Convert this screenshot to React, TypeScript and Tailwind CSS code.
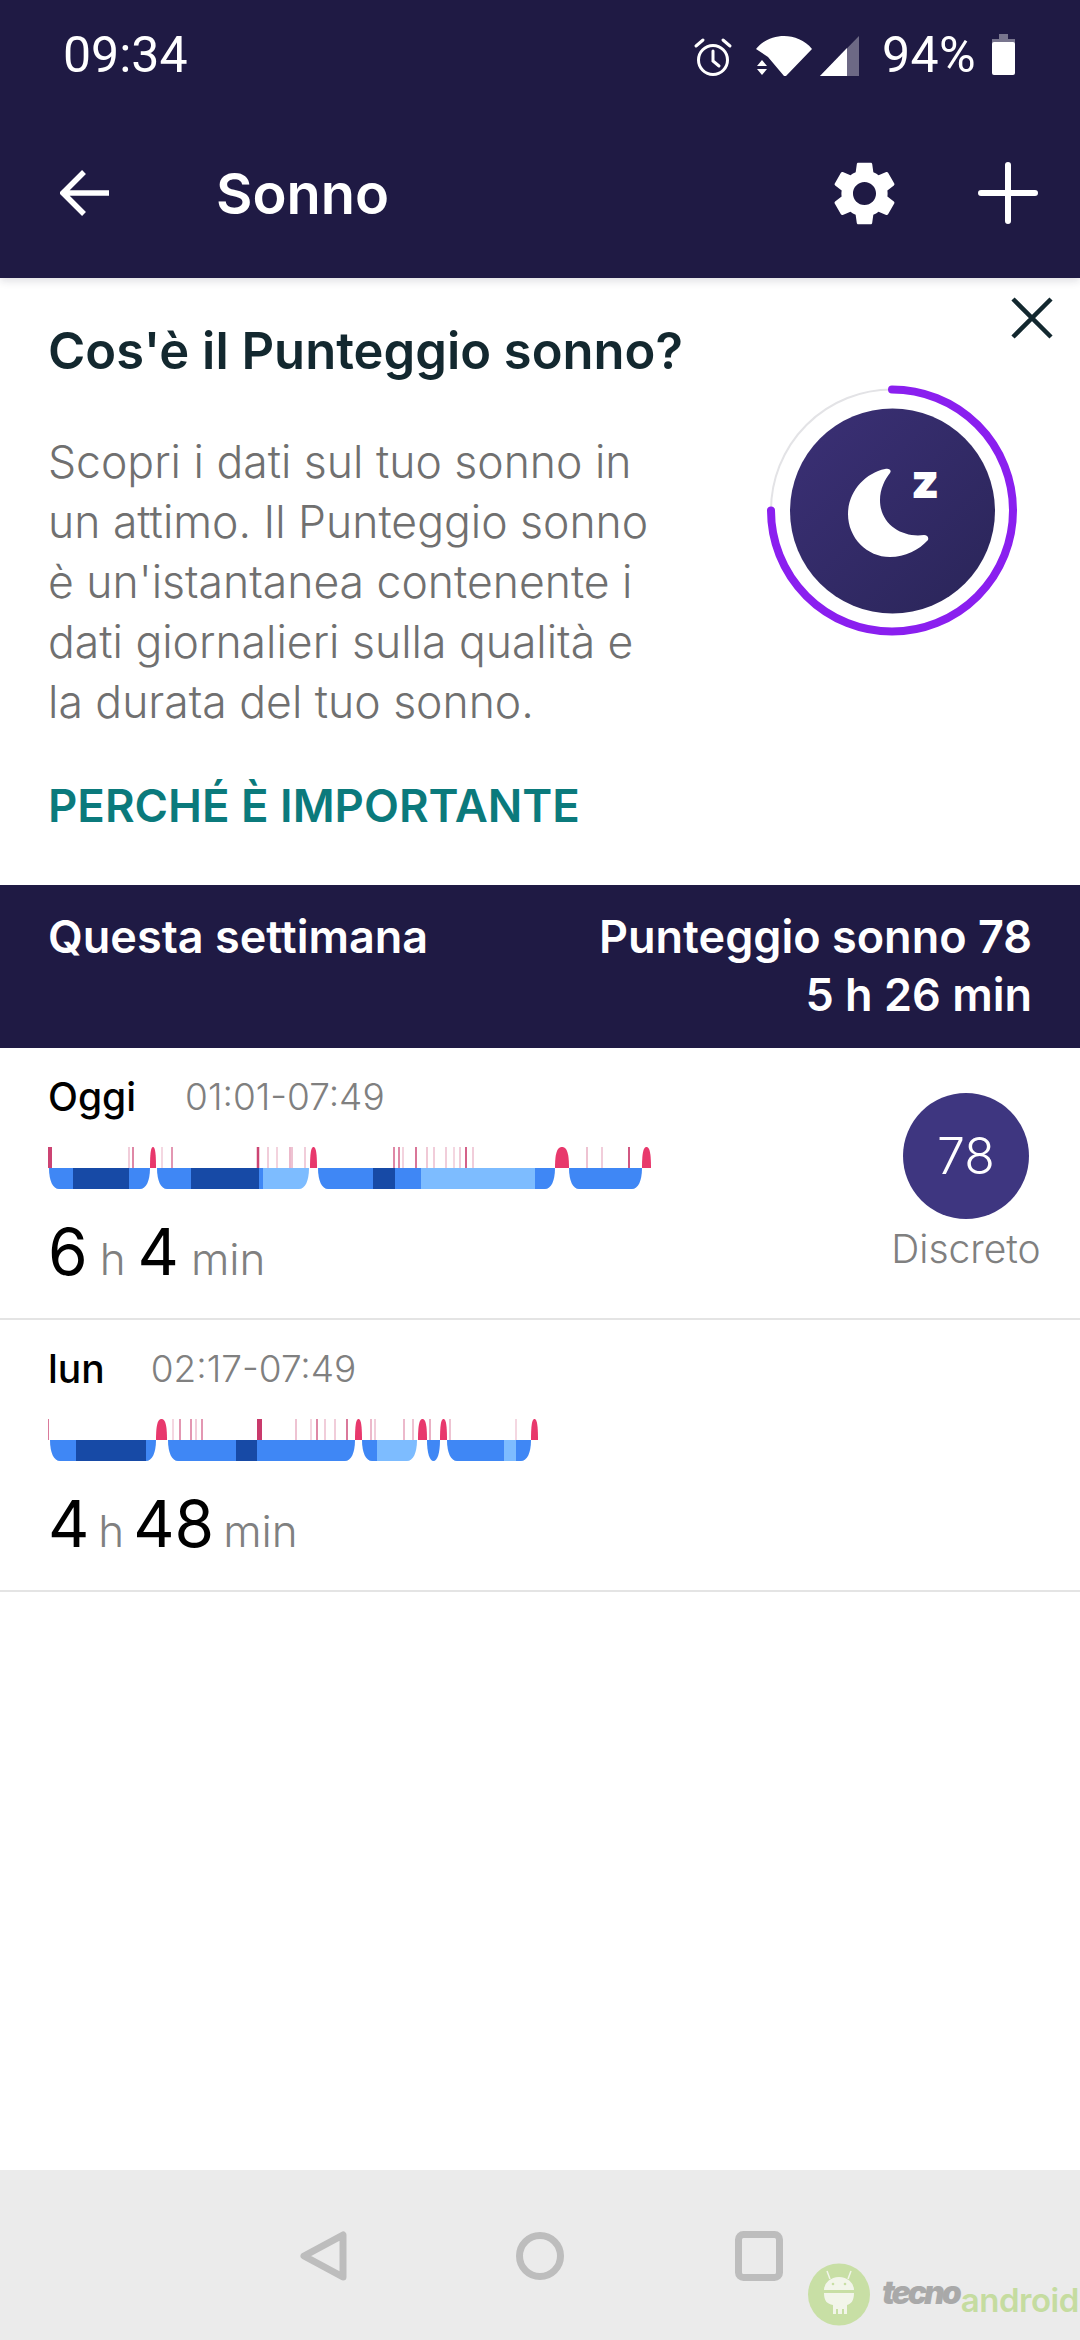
import React from 'react';

type Seg = [number, 'l' | 'm' | 'd'];
type Group = { from: number; to: number; segs: Seg[] };

const segColor = { l: '#7dbcff', m: '#3f87f5', d: '#174aa6' };

const todayBar = {
  groups: [
    { from: 49, to: 150, segs: [[49, 'm'], [73, 'd'], [129, 'm']] },
    { from: 157, to: 309, segs: [[157, 'm'], [191, 'd'], [259, 'm'], [263, 'l']] },
    { from: 318, to: 555, segs: [[318, 'm'], [373, 'd'], [395, 'm'], [421, 'l'], [535, 'm']] },
    { from: 569, to: 642, segs: [[569, 'm']] },
  ] as Group[],
  blobs: [[150, 156], [310, 317], [555, 569], [642, 651]],
  lines: [
    [50, 4, 0.95], [129, 1, 0.5], [133, 1.5, 0.8], [162, 1, 0.4], [172, 1.5, 0.7], [258, 2.5, 0.95], [268, 1, 0.5],
    [277, 1, 0.45], [290, 1, 0.7], [292, 1, 0.6], [305, 1, 0.5], [394, 1.5, 0.8], [399, 1.5, 0.8], [403, 1, 0.45],
    [416, 2, 0.7], [427, 1, 0.55], [434, 1, 0.5], [446, 1, 0.5], [454, 1, 0.4], [460, 1, 0.5], [466, 2, 0.8],
    [473, 1, 0.5], [587, 1, 0.6], [602, 1, 0.5], [629, 2, 0.85],
  ],
};

const mondayBar = {
  groups: [
    { from: 50, to: 156, segs: [[50, 'm'], [76, 'd'], [146, 'm']] },
    { from: 168, to: 355, segs: [[168, 'm'], [236, 'd'], [257, 'm']] },
    { from: 362, to: 417, segs: [[362, 'm'], [377, 'l']] },
    { from: 427, to: 440, segs: [[427, 'm']] },
    { from: 447, to: 531, segs: [[447, 'm'], [504, 'l'], [516, 'm']] },
  ] as Group[],
  blobs: [[156, 167], [355, 362], [418, 427], [440, 447], [531, 538]],
  lines: [
    [48, 1.5, 0.9], [173, 1, 0.4], [180, 1.5, 0.7], [191, 1.5, 0.7], [196, 1, 0.5], [202, 1.5, 0.7], [259.5, 5, 1],
    [296, 1, 0.6], [311, 1, 0.4], [317, 1.5, 0.8], [325, 1, 0.5], [335, 1, 0.5], [347, 1.5, 0.9], [371, 1, 0.7],
    [375, 1, 0.5], [404, 1, 0.7], [413, 1, 0.6], [430, 1, 0.8], [450, 1, 0.6], [516, 1, 0.4],
  ],
};

function SleepBar({ id, data }: { id: string; data: typeof todayBar }) {
  return (
    <svg width="620" height="42" viewBox="48 0 620 42" className="block">
      {data.lines.map(([x, w, o], i) => (
        <rect key={i} x={x - w / 2} y="0" width={w} height="21" fill="#c93a6c" opacity={o} />
      ))}
      {data.blobs.map(([a, b], i) => (
        <path key={i} d={`M${a} 21 C${a} 4 ${a + (b - a) * 0.2} 0 ${(a + b) / 2} 0 C${b - (b - a) * 0.2} 0 ${b} 4 ${b} 21 Z`} fill="#e8386c" />
      ))}
      {data.groups.map((g, i) => {
        const r = Math.min(10, (g.to - g.from) / 2);
        const shape = `M${g.from} 21 C${g.from} 34 ${g.from + r * 0.4} 42 ${g.from + r} 42 L${g.to - r} 42 C${g.to - r * 0.4} 42 ${g.to} 34 ${g.to} 21 Z`;
        return (
          <g key={i}>
            <clipPath id={`${id}-${i}`}>
              <path d={shape} />
            </clipPath>
            <g clipPath={`url(#${id}-${i})`}>
              {g.segs.map(([x, c], j) => (
                <rect key={j} x={x} y="21" width={(g.segs[j + 1]?.[0] ?? g.to) - x} height="21" fill={segColor[c]} />
              ))}
            </g>
          </g>
        );
      })}
    </svg>
  );
}

function SleepRow({ day, time, timeGap, unitGap, h, m, id, bar, score }: { day: string; time: string; timeGap: string; unitGap: string; h: string; m: string; id: string; bar: typeof todayBar; score?: boolean }) {
  return (
    <div className="relative h-[272px] border-b-2 border-[#e4e4e4] pl-[48px] pt-[24px]">
      <div className={`flex items-center h-[50px] ${timeGap}`}>
        <span className="text-[39px] font-medium text-black">{day}</span>
        <span className="text-[37px] text-[#808080] font-light">{time}</span>
      </div>
      <div className="mt-[25px]">
        <SleepBar id={id} data={bar} />
      </div>
      <div className={`mt-[28px] flex items-baseline h-[70px] leading-[70px] text-[#808080] text-[44px] font-light ${unitGap}`}>
        <span className="text-[64px] font-normal text-black">{h}</span>
        <span>h</span>
        <span className="text-[64px] font-normal text-black">{m}</span>
        <span>min</span>
      </div>
      {score && (
        <div className="absolute top-[45px] right-[51px] w-[126px] flex flex-col items-center">
          <div className="w-[126px] h-[126px] rounded-full bg-[#3e3680] text-white text-[50px] font-light flex items-center justify-center">78</div>
          <div className="mt-[5px] text-[39px] leading-[50px] font-light text-[#808080]">Discreto</div>
        </div>
      )}
    </div>
  );
}

export default function App() {
  return (
    <div className="relative w-[1080px] h-[2340px] flex flex-col bg-white font-['Inter',sans-serif] overflow-hidden">
      <header className="relative z-10 h-[278px] bg-[#1f1a44] text-white shadow-[0_3px_8px_rgba(30,30,60,0.14)]">
        <div className="h-[108px] flex items-start pl-[63px] pr-[65px] pt-[26px] font-['Roboto',sans-serif] text-[50px] leading-[58px]">
          <span>09:34</span>
          <div className="ml-auto flex items-start">
            <svg width="40" height="40" viewBox="0 0 40 40" fill="none" stroke="white" strokeWidth="3" className="mt-[11px]">
              <circle cx="20" cy="23" r="14.5" />
              <path d="M20 14v10l6 5M3 9l7-6M37 9l-7-6" strokeLinecap="round" />
            </svg>
            <svg width="56" height="40" viewBox="0 0 56 40" fill="white" className="ml-[23px] mt-[10px]">
              <path d="M0 13C7 4 18 0 28 0s21 4 28 13L30 40h-2L12 21z" />
              <path d="M6 24l5 6H1zM1 33h10l-5 6z" />
            </svg>
            <svg width="39" height="40" viewBox="0 0 39 40" className="ml-[8px] mt-[10px]">
              <path d="M39 0v40H0z" fill="white" opacity="0.35" />
              <path d="M27 12v28H0z" fill="white" />
            </svg>
            <span className="ml-[23px] tracking-[0.4px]">94%</span>
            <svg width="23" height="41" viewBox="0 0 23 41" className="ml-[16px] mt-[8px]">
              <path d="M7 0h9v5h7v5H0V5h7z" fill="white" opacity="0.4" />
              <rect x="0" y="8" width="23" height="33" rx="2" fill="white" />
            </svg>
          </div>
        </div>
        <div className="h-[170px] relative flex items-start pl-[60px] pt-[53px]">
          <svg width="49" height="48" viewBox="0 0 49 48" fill="none" stroke="white" strokeWidth="5.5" className="mt-[9px]">
            <path d="M49 23H5M24 2L3 23l21 21" />
          </svg>
          <h1 className="ml-[107px] text-[56px] leading-[66px] font-semibold">Sonno</h1>
          <svg width="77" height="77" viewBox="0 0 24 24" fill="white" className="absolute left-[826px] top-[47px]">
            <path d="M19.14 12.94c.04-.3.06-.61.06-.94 0-.32-.02-.64-.07-.94l2.03-1.58c.18-.14.23-.41.12-.61l-1.92-3.32c-.12-.22-.37-.29-.59-.22l-2.39.96c-.5-.38-1.03-.7-1.62-.94l-.36-2.54c-.04-.24-.24-.41-.48-.41h-3.84c-.24 0-.43.17-.47.41l-.36 2.54c-.59.24-1.13.57-1.62.94l-2.39-.96c-.22-.08-.47 0-.59.22L2.74 8.87c-.12.21-.08.47.12.61l2.03 1.58c-.05.3-.09.63-.09.94s.02.64.07.94l-2.03 1.58c-.18.14-.23.41-.12.61l1.92 3.32c.12.22.37.29.59.22l2.39-.96c.5.38 1.03.7 1.62.94l.36 2.54c.05.24.24.41.48.41h3.84c.24 0 .44-.17.47-.41l.36-2.54c.59-.24 1.13-.56 1.62-.94l2.39.96c.22.08.47 0 .59-.22l1.92-3.32c.12-.22.07-.47-.12-.61l-2.01-1.58zM12 15.6c-1.98 0-3.6-1.62-3.6-3.6s1.62-3.6 3.6-3.6 3.6 1.62 3.6 3.6-1.62 3.6-3.6 3.6z" />
          </svg>
          <svg width="60" height="62" viewBox="0 0 60 62" stroke="white" strokeWidth="6" strokeLinecap="round" className="absolute left-[978px] top-[54px]">
            <path d="M30 3v56M3 31h54" />
          </svg>
        </div>
      </header>

      <section className="relative h-[607px] flex justify-between pl-[48px]">
        <div className="pt-[43px]">
          <h2 className="text-[50.7px] leading-[60px] font-semibold text-[#13282f] whitespace-nowrap">Cos'è il Punteggio sonno?</h2>
          <p className="mt-[51px] w-[615px] text-[44.5px] leading-[60px] font-light text-[#707070]">
            Scopri i dati sul tuo sonno in un attimo. Il Punteggio sonno è un'istantanea contenente i dati giornalieri sulla qualità e la durata del tuo sonno.
          </p>
          <div className="mt-[49px] text-[45.5px] leading-[50px] font-semibold text-[#0b7a7c] whitespace-nowrap">PERCHÉ È IMPORTANTE</div>
        </div>
        <svg width="320" height="300" viewBox="0 0 320 300" fill="none" className="mt-[82px] mr-[40px] shrink-0">
          <defs>
            <linearGradient id="sleepDisc" x1="0" y1="0" x2="1" y2="1">
              <stop offset="0" stopColor="#3b3076" />
              <stop offset="1" stopColor="#2a2558" />
            </linearGradient>
          </defs>
          <circle cx="172" cy="150.5" r="121" stroke="#e3e3e6" strokeWidth="2" />
          <path d="M172 29.5A121 121 0 1 1 51 150.5" stroke="#8a1fef" strokeWidth="8" strokeLinecap="round" />
          <circle cx="172.5" cy="151" r="102.5" fill="url(#sleepDisc)" />
          <path d="M165 109C145 113 128 132 128 154C128 178 147 197 170 197C185 197 199 190 208 180C209 177 207 175 204 175C183 178 160 165 160 140C160 129 165 119 170 113C172 110 169 108 165 109Z" fill="white" />
          <text x="191" y="138" fill="white" fontSize="48" fontWeight="900" fontFamily="Inter, sans-serif">z</text>
        </svg>
        <svg width="42" height="42" viewBox="0 0 42 42" stroke="#13282f" strokeWidth="4.5" className="absolute left-[1011px] top-[19px]">
          <path d="M2 2l38 38M40 2L2 40" />
        </svg>
      </section>

      <section className="h-[163px] bg-[#1f1a44] text-white font-semibold text-[45px] leading-[58px] pl-[48px] pr-[48px] pt-[23px] flex justify-between">
        <div>Questa settimana</div>
        <div className="text-right">
          <div>Punteggio sonno 78</div>
          <div>5 h 26 min</div>
        </div>
      </section>

      <SleepRow id="today" day="Oggi" time="01:01-07:49" timeGap="gap-[49px]" unitGap="gap-[12px]" h="6" m="4" bar={todayBar} score />
      <SleepRow id="mon" day="lun" time="02:17-07:49" timeGap="gap-[46px]" unitGap="gap-[9px]" h="4" m="48" bar={mondayBar} />

      <div className="flex-1" />

      <nav className="h-[170px] bg-[#ebebeb] flex items-start pl-[300px] pt-[61px] gap-[168px]">
        <svg width="48" height="50" viewBox="0 0 48 50" fill="none" stroke="#bdbdbd" strokeWidth="7" strokeLinejoin="round">
          <path d="M43 4v42L4 25z" />
        </svg>
        <svg width="48" height="50" viewBox="0 0 48 50" fill="none" stroke="#bdbdbd" strokeWidth="7">
          <circle cx="24" cy="25" r="20.5" />
        </svg>
        <svg width="48" height="50" viewBox="0 0 48 50" fill="none" stroke="#bdbdbd" strokeWidth="7" className="ml-[3px]">
          <rect x="3.5" y="3.5" width="41" height="43" rx="5" />
        </svg>
      </nav>

      {/* site watermark over the nav bar */}
      <div className="absolute left-[808px] top-[2263px] flex items-start">
        <svg width="62" height="63" viewBox="0 0 62 63">
          <circle cx="31" cy="31.5" r="31" fill="#c8dfa5" />
          <path d="M16 27a15 13 0 0 1 30 0zM16 30h30c0 8-3 11-7 12v9h-3v-5h-2v5h-4v-5h-2v5h-3v-9c-6-1-9-4-9-12z" fill="#f2f5ea" />
          <path d="M22 16l-3-8M40 16l3-8" stroke="#f2f5ea" strokeWidth="1.5" />
          <circle cx="25" cy="21" r="1.3" fill="#c8dfa5" />
          <circle cx="37" cy="21" r="1.3" fill="#c8dfa5" />
        </svg>
        <span className="ml-[12px] mt-[12px] text-[32px] leading-[36px] font-black italic tracking-[-3px] text-[#a9a9a9] whitespace-nowrap">tecno</span>
        <span className="ml-[2px] mt-[19px] text-[33px] leading-[36px] font-semibold tracking-[-0.5px] text-[#c5dca0] whitespace-nowrap">android</span>
      </div>
    </div>
  );
}
